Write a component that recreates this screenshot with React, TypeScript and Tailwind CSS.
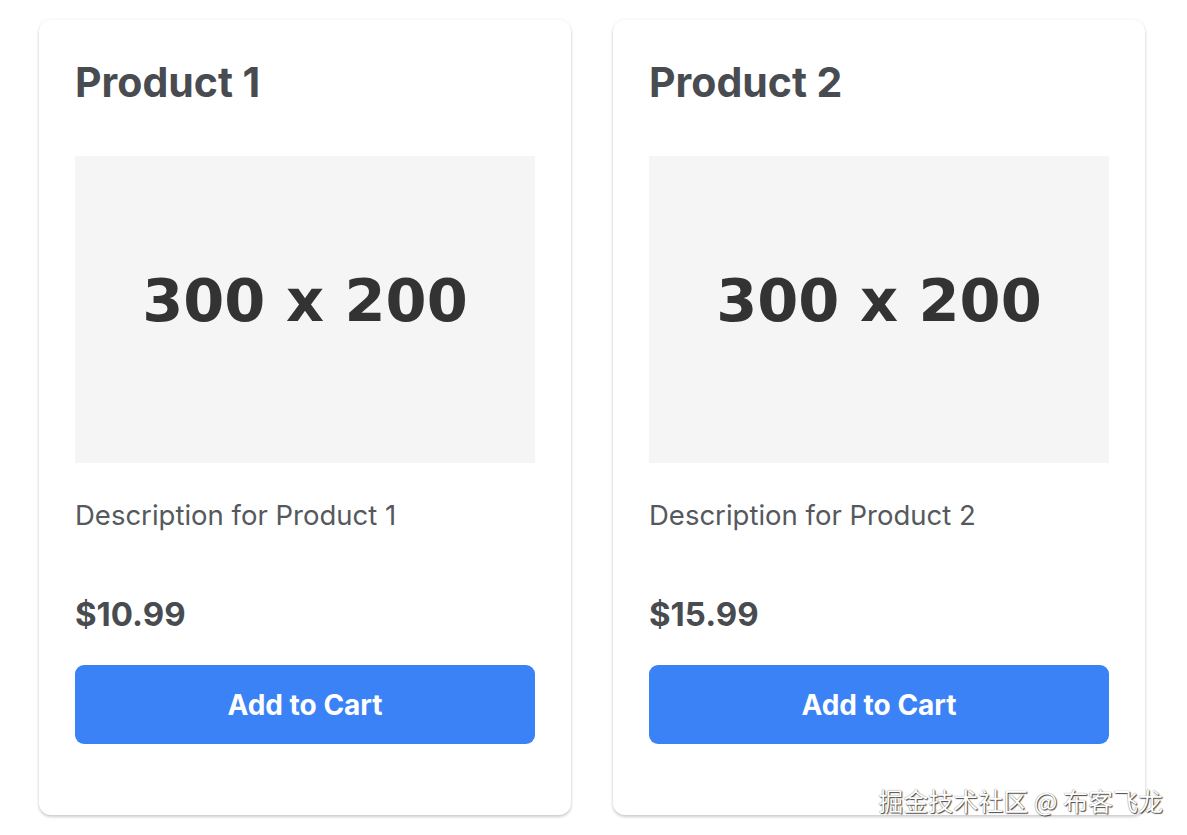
import React from 'react';

interface Product {
  id: number;
  name: string;
  description: string;
  price: string;
}

const products: Product[] = [
  { id: 1, name: 'Product 1', description: 'Description for Product 1', price: '$10.99' },
  { id: 2, name: 'Product 2', description: 'Description for Product 2', price: '$15.99' },
];

// Grey placeholder standing in for the 300x200 product image
const Placeholder: React.FC = () => (
  <div className="h-[307px] w-full bg-[#f5f5f5] flex items-center justify-center pb-[18px]">
    <span className="font-['DejaVu_Sans',sans-serif] font-bold text-[59px] text-[#333333] leading-none">
      300 x 200
    </span>
  </div>
);

const ProductCard: React.FC<{ product: Product }> = ({ product }) => (
  <div className="w-[532px] h-[795px] bg-white rounded-[12px] shadow-[0_2px_3px_rgba(0,0,0,0.18),0_0_4px_rgba(0,0,0,0.06)] px-[36px] pt-[38px] flex flex-col">
    <h2 className="text-[41px] leading-[48px] font-bold text-[#484c51]">{product.name}</h2>
    <div className="mt-[50px]">
      <Placeholder />
    </div>
    <p className="mt-[32px] text-[27.5px] leading-[40px] text-[#55595e]">{product.description}</p>
    <p className="mt-[59px] text-[33px] leading-[40px] font-bold text-[#484c51]">{product.price}</p>
    <button className="mt-[31px] h-[79px] w-full rounded-[9px] bg-[#3b82f6] text-white text-[28px] font-bold">
      Add to Cart
    </button>
  </div>
);

export default function App() {
  return (
    <div className="relative w-[1187px] h-[835px] bg-white font-['Inter',sans-serif] overflow-hidden">
      <div className="flex gap-[42px] pl-[39px] pt-[20px]">
        {products.map((p) => (
          <ProductCard key={p.id} product={p} />
        ))}
      </div>
      <div className="absolute right-[24px] bottom-[22px] text-[25px] leading-none text-white font-['Noto_Sans_CJK_SC',sans-serif] [text-shadow:1px_1px_1px_rgba(0,0,0,0.7),0_0_1px_rgba(0,0,0,0.6)]">
        掘金技术社区 @ 布客飞龙
      </div>
    </div>
  );
}
